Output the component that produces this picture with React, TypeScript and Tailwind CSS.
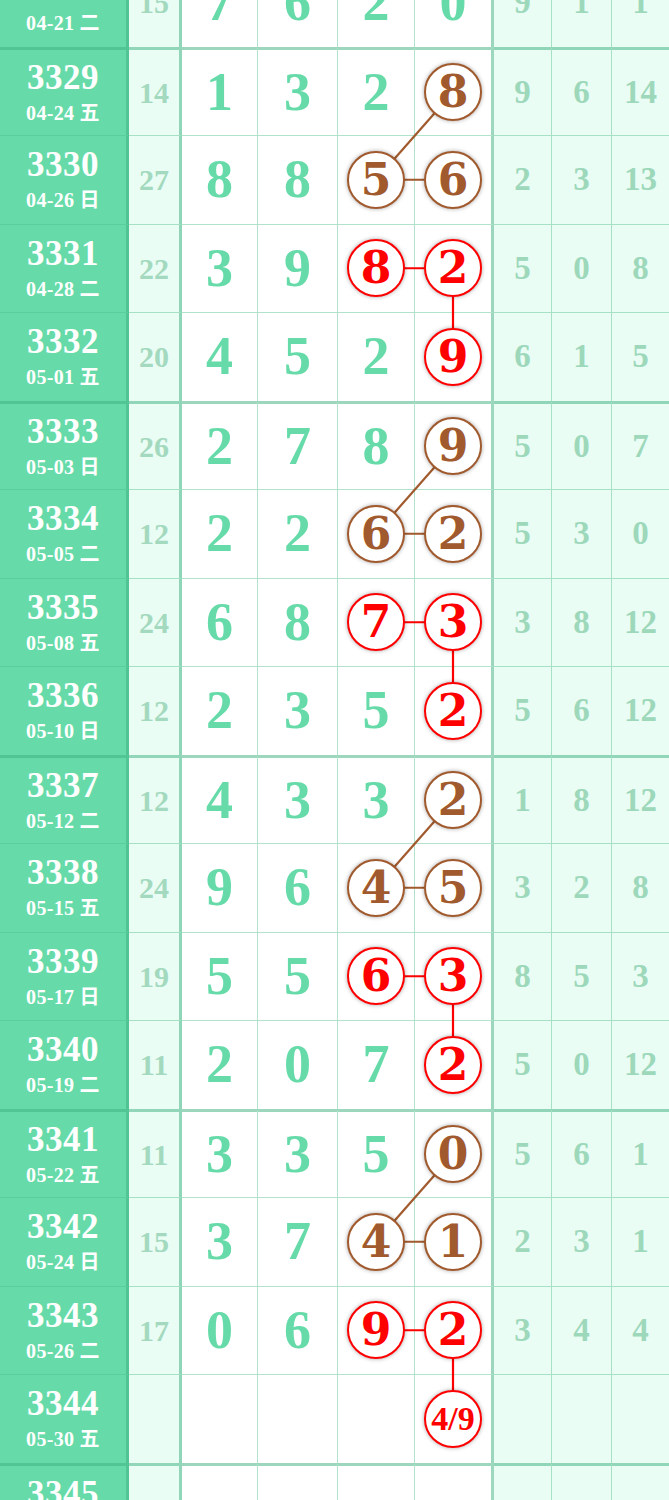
import React from "react";

type Circ = { v: string; c: "b" | "r" };

interface Row {
  n: string;
  d: string;
  s: string;
  a: string[];
  r: string[];
  c3?: Circ;
  c4?: Circ;
}

const ROWS: Row[] = [
  { n: "3328", d: "04-21 二", s: "15", a: ["7", "6", "2", "0"], r: ["9", "1", "1"] },
  { n: "3329", d: "04-24 五", s: "14", a: ["1", "3", "2", ""], r: ["9", "6", "14"], c4: { v: "8", c: "b" } },
  { n: "3330", d: "04-26 日", s: "27", a: ["8", "8", "", ""], r: ["2", "3", "13"], c3: { v: "5", c: "b" }, c4: { v: "6", c: "b" } },
  { n: "3331", d: "04-28 二", s: "22", a: ["3", "9", "", ""], r: ["5", "0", "8"], c3: { v: "8", c: "r" }, c4: { v: "2", c: "r" } },
  { n: "3332", d: "05-01 五", s: "20", a: ["4", "5", "2", ""], r: ["6", "1", "5"], c4: { v: "9", c: "r" } },
  { n: "3333", d: "05-03 日", s: "26", a: ["2", "7", "8", ""], r: ["5", "0", "7"], c4: { v: "9", c: "b" } },
  { n: "3334", d: "05-05 二", s: "12", a: ["2", "2", "", ""], r: ["5", "3", "0"], c3: { v: "6", c: "b" }, c4: { v: "2", c: "b" } },
  { n: "3335", d: "05-08 五", s: "24", a: ["6", "8", "", ""], r: ["3", "8", "12"], c3: { v: "7", c: "r" }, c4: { v: "3", c: "r" } },
  { n: "3336", d: "05-10 日", s: "12", a: ["2", "3", "5", ""], r: ["5", "6", "12"], c4: { v: "2", c: "r" } },
  { n: "3337", d: "05-12 二", s: "12", a: ["4", "3", "3", ""], r: ["1", "8", "12"], c4: { v: "2", c: "b" } },
  { n: "3338", d: "05-15 五", s: "24", a: ["9", "6", "", ""], r: ["3", "2", "8"], c3: { v: "4", c: "b" }, c4: { v: "5", c: "b" } },
  { n: "3339", d: "05-17 日", s: "19", a: ["5", "5", "", ""], r: ["8", "5", "3"], c3: { v: "6", c: "r" }, c4: { v: "3", c: "r" } },
  { n: "3340", d: "05-19 二", s: "11", a: ["2", "0", "7", ""], r: ["5", "0", "12"], c4: { v: "2", c: "r" } },
  { n: "3341", d: "05-22 五", s: "11", a: ["3", "3", "5", ""], r: ["5", "6", "1"], c4: { v: "0", c: "b" } },
  { n: "3342", d: "05-24 日", s: "15", a: ["3", "7", "", ""], r: ["2", "3", "1"], c3: { v: "4", c: "b" }, c4: { v: "1", c: "b" } },
  { n: "3343", d: "05-26 二", s: "17", a: ["0", "6", "", ""], r: ["3", "4", "4"], c3: { v: "9", c: "r" }, c4: { v: "2", c: "r" } },
  { n: "3344", d: "05-30 五", s: "", a: ["", "", "", ""], r: ["", "", ""], c4: { v: "4/9", c: "r" } },
  { n: "3345", d: "06-02 二", s: "", a: ["", "", "", ""], r: ["", "", ""] },
  { n: "3346", d: "06-04 四", s: "", a: ["", "", "", ""], r: ["", "", ""] },
];

const ROW_H = 88.5;
const X3 = 376;
const X4 = 453;
const BROWN = "#a15a2d";
const RED = "#ff0000";

const TOP_THICK = "border-t-[3px] border-t-[#3caf7d80]";
const TOP_THIN = "border-t border-t-[#50be8c70]";

const isThick = (i: number) => i % 4 === 1;

const centerY = (i: number) => {
  const bt = isThick(i) ? 3 : 1;
  return i * ROW_H + bt + (ROW_H - bt) / 2;
};

function Circle({ v, c }: Circ) {
  const color = c === "b" ? "border-[#a15a2d] text-[#a15a2d]" : "border-[#ff0000] text-[#ff0000]";
  return (
    <div className={`relative z-10 w-[58px] h-[58px] rounded-full bg-white border-[2.5px] flex items-center justify-center shadow-[0_0_4px_rgba(0,0,0,0.35)] ${color}`}>
      {v.length > 1 ? (
        <span className="text-[34px] font-bold leading-none">{v}</span>
      ) : (
        <span className="font-['DejaVu_Serif',serif] text-[44px] font-bold leading-none">{v}</span>
      )}
    </div>
  );
}

function Lines() {
  const segs: { x1: number; y1: number; x2: number; y2: number; col: string }[] = [];
  for (let g = 0; g < 4; g++) {
    const i = 1 + g * 4;
    segs.push({ x1: X4, y1: centerY(i), x2: X3, y2: centerY(i + 1), col: BROWN });
    segs.push({ x1: X3, y1: centerY(i + 1), x2: X4, y2: centerY(i + 1), col: BROWN });
    segs.push({ x1: X3, y1: centerY(i + 2), x2: X4, y2: centerY(i + 2), col: RED });
    segs.push({ x1: X4, y1: centerY(i + 2), x2: X4, y2: centerY(i + 3), col: RED });
  }
  return (
    <svg className="absolute top-0 left-0 pointer-events-none" width={669} height={ROWS.length * ROW_H}>
      {segs.map((s, k) => (
        <line key={k} x1={s.x1} y1={s.y1} x2={s.x2} y2={s.y2} stroke={s.col} strokeWidth={2.2} />
      ))}
    </svg>
  );
}

export default function App() {
  return (
    <div className="h-[1500px] w-[669px] overflow-hidden bg-white font-['Liberation_Serif','Noto_Sans_CJK_SC',serif]">
      <div className="relative -mt-[42px]">
        <Lines />
        {ROWS.map((row, i) => {
          const top = isThick(i) ? TOP_THICK : TOP_THIN;
          const digitCell = "flex items-center justify-center text-[54px] font-bold text-[#66dba9]";
          const sideCell = "flex items-center justify-center bg-[#e9fdf4] text-[33px] font-bold text-[#9dd8bb]";
          return (
            <div key={row.n} className="flex h-[88.5px]">
              {/* issue + date */}
              <div className={`w-[129px] pt-[3px] bg-[#66dba9] border-r-[3px] border-r-[#3caf7d80] flex flex-col items-center justify-center text-white ${top}`}>
                <span className="text-[35px] font-bold leading-[38px] tracking-[0.5px]">{row.n}</span>
                <span className="text-[20px] font-bold leading-[32px] tracking-[0.3px]">{row.d}</span>
              </div>
              {/* sum */}
              <div className={`w-[53px] bg-[#e9fdf4] border-r-[3px] border-r-[#3caf7d80] flex items-center justify-center text-[30px] font-bold text-[#a3d9be] ${top}`}>
                {row.s}
              </div>
              <div className={`w-[76px] border-r border-r-[#50be8c70] ${digitCell} ${top}`}>{row.a[0]}</div>
              <div className={`w-[80px] border-r border-r-[#50be8c70] ${digitCell} ${top}`}>{row.a[1]}</div>
              <div className={`w-[77px] border-r border-r-[#50be8c70] ${digitCell} ${top}`}>
                {row.c3 ? <Circle {...row.c3} /> : row.a[2]}
              </div>
              <div className={`w-[79px] border-r-[3px] border-r-[#3caf7d80] ${digitCell} ${top}`}>
                {row.c4 ? <Circle {...row.c4} /> : row.a[3]}
              </div>
              <div className={`w-[58px] border-r border-r-[#50be8c70] ${sideCell} ${top}`}>{row.r[0]}</div>
              <div className={`w-[60px] border-r border-r-[#50be8c70] ${sideCell} ${top}`}>{row.r[1]}</div>
              <div className={`w-[57px] ${sideCell} ${top}`}>{row.r[2]}</div>
            </div>
          );
        })}
      </div>
    </div>
  );
}
